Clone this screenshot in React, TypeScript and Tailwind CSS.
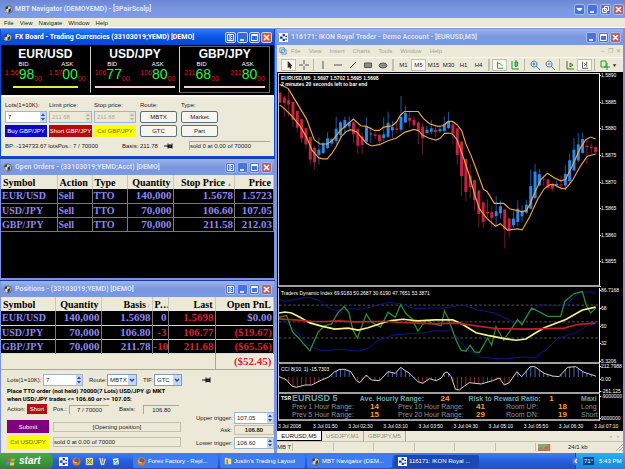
import type { ReactNode } from "react"
import clsx from "clsx"

const pairs = [
  { name: "EUR/USD", bid: ["1.56", "98"], ask: ["1.57", "00"], bar: "bg-[#e8e83c]" },
  { name: "USD/JPY", bid: ["106", "77"], ask: ["106", "80"], bar: "bg-[#f6d0cc]" },
  { name: "GBP/JPY", bid: ["211", "68"], ask: ["211", "80"], bar: "bg-[#f6d0cc]" },
]

const orders = [
  ["EUR/USD", "Sell", "TTO", "140,000", "1.5678", "1.5723"],
  ["USD/JPY", "Sell", "TTO", "70,000", "106.60", "107.05"],
  ["GBP/JPY", "Sell", "TTO", "70,000", "211.58", "212.03"],
]

const positions = [
  ["EUR/USD", "140,000", "1.5698", "0", "1.5698", "$0.00"],
  ["USD/JPY", "70,000", "106.80", "-3", "106.77", "($19.67)"],
  ["GBP/JPY", "70,000", "211.78", "-10", "211.68", "($65.56)"],
]

// high, body top, body bottom, low, 1 = up
const candles = [
  [80, 80, 110, 110, 0], [88, 95, 111, 153, 0], [68, 103, 116, 152, 0], [108, 108, 162, 185, 0],
  [135, 135, 186, 200, 0], [160, 160, 218, 232, 0], [187, 187, 236, 250, 0], [212, 214, 282, 297, 0],
  [240, 246, 290, 312, 0], [216, 252, 268, 297, 1], [228, 233, 262, 265, 1], [200, 218, 247, 250, 1],
  [218, 220, 234, 240, 1], [153, 189, 226, 236, 1], [165, 170, 208, 214, 1], [152, 163, 186, 206, 1],
  [152, 170, 182, 190, 1], [168, 170, 206, 232, 0], [186, 190, 240, 265, 0], [200, 212, 238, 265, 0],
  [153, 184, 228, 232, 1], [183, 203, 206, 232, 1], [196, 206, 211, 220, 0], [206, 207, 227, 236, 0],
  [155, 206, 217, 226, 1], [138, 171, 213, 217, 1], [165, 184, 194, 216, 1], [170, 188, 192, 203, 0],
  [90, 153, 192, 200, 1], [120, 142, 170, 172, 1], [134, 156, 165, 186, 0], [150, 162, 178, 184, 0],
  [165, 170, 196, 235, 0], [172, 183, 218, 265, 0], [182, 192, 202, 206, 1], [162, 188, 198, 204, 1],
  [182, 192, 199, 215, 0], [182, 190, 196, 203, 1], [152, 175, 196, 200, 1], [138, 167, 187, 190, 1],
  [168, 176, 202, 237, 0], [185, 188, 268, 297, 0], [226, 228, 332, 392, 0], [278, 280, 380, 407, 0],
  [295, 330, 365, 398, 0], [342, 344, 404, 435, 0], [372, 375, 446, 487, 0], [408, 411, 470, 487, 0],
  [402, 440, 443, 455, 0], [422, 440, 458, 487, 0], [391, 438, 452, 480, 1], [405, 423, 444, 460, 1],
  [430, 432, 492, 550, 0], [458, 460, 496, 518, 0], [436, 460, 480, 487, 1], [405, 430, 470, 482, 1],
  [420, 437, 453, 470, 1], [403, 418, 442, 446, 1], [312, 362, 430, 432, 1], [295, 318, 398, 402, 1],
  [310, 326, 360, 362, 1], [330, 342, 344, 362, 0], [340, 342, 367, 374, 0], [350, 355, 370, 377, 0],
  [346, 355, 360, 366, 1], [330, 357, 360, 373, 0], [298, 325, 360, 374, 1], [264, 284, 347, 352, 1],
  [217, 252, 315, 318, 1], [202, 236, 285, 290, 1], [200, 220, 262, 264, 1], [222, 240, 245, 296, 0],
  [234, 243, 248, 264, 0], [243, 244, 259, 265, 0],
]

const bandUpper =
  "2,55 28,68 41,90 83,160 106,222 123,235 145,235 163,222 184,195 203,178 224,160 246,180 263,182 288,194 302,194 315,184 341,180 354,168 367,146 378,137 419,137 434,158 453,174 478,182 493,180 510,167 522,167 536,177 550,195 562,234 578,270 596,318 615,371 626,378 648,414 676,414 694,430 730,439 744,436 756,415 768,385 788,342 808,323 828,337 848,346 862,342 883,300 908,245 923,222 938,214 953,220"
const bandLower =
  "2,117 18,130 38,150 63,180 83,215 100,255 120,277 132,280 145,280 158,265 171,245 188,212 203,197 216,192 233,198 250,217 263,233 278,241 302,237 328,225 354,217 378,200 406,191 420,195 432,208 450,217 472,223 485,218 498,203 510,202 522,205 536,222 553,270 573,330 588,385 603,430 626,460 652,483 666,475 688,495 718,491 732,494 754,455 778,402 798,370 816,357 828,358 848,368 862,370 883,345 908,300 928,272 953,265"

const tdiLines = [
  { color: "#14148c", width: 3, points: "0,55 18,62 48,56 88,48 118,58 148,80 168,90 218,84 248,86 288,76 328,65 363,68 408,84 448,82 498,82 553,72 598,88 648,97 708,125 733,122 758,90 788,72 828,75 863,72 898,40 913,33 953,34" },
  { color: "#14148c", width: 3, points: "0,110 38,140 88,195 128,211 188,208 238,213 268,205 298,180 348,163 398,160 438,158 468,150 498,152 518,148 538,175 568,210 608,232 678,237 738,230 768,235 808,205 838,175 898,155 928,135 953,130" },
  { color: "#2c8a34", width: 4, points: "0,110 23,105 41,155 58,172 78,195 93,212 118,155 138,135 158,130 176,98 196,78 210,95 223,150 236,173 263,100 278,125 306,140 328,95 350,110 366,72 383,100 398,112 418,152 443,118 463,130 488,136 498,90 510,115 533,180 548,210 563,213 575,195 588,215 603,217 628,173 640,195 653,138 676,180 718,117 731,132 760,82 783,93 808,107 848,107 860,62 888,38 913,32 925,75 938,97 953,83" },
  { color: "#f4f08c", width: 5, points: "0,97 18,94 38,97 63,110 93,127 128,137 168,146 208,143 238,149 268,142 308,128 338,120 373,116 418,121 468,118 523,118 553,132 593,157 628,165 678,175 713,180 743,176 768,160 798,142 863,117 913,88 953,79" },
  { color: "#c42026", width: 5, points: "0,115 48,118 98,122 138,123 178,121 228,124 328,122 358,126 418,128 468,130 538,128 598,137 658,145 748,146 858,143 898,132 953,128" },
]

const cci = [
  [0, 290], [23, 300], [38, 318], [53, 322], [78, 315], [98, 315], [128, 300], [148, 292], [168, 275], [183, 268],
  [198, 268], [216, 275], [233, 302], [243, 308], [263, 285], [278, 300], [303, 302], [328, 275], [350, 280],
  [366, 262], [380, 272], [393, 280], [418, 305], [433, 310], [453, 296], [473, 302], [488, 295], [498, 279],
  [506, 276], [518, 290], [531, 328], [543, 330], [558, 318], [573, 308], [608, 312], [643, 302], [663, 294],
  [678, 315], [693, 308], [716, 275], [730, 290], [756, 260], [770, 260], [798, 280], [823, 288], [843, 290],
  [868, 262], [893, 260], [918, 277], [953, 288],
]

function cciAt(x: number) {
  const i = Math.max(1, cci.findIndex(([px]) => px >= x))
  const [x0, y0] = cci[i - 1]
  const [x1, y1] = cci[i]
  return y0 + ((x - x0) / (x1 - x0)) * (y1 - y0)
}

const candleX = (i: number) => 3 + i * 13.01

/* ---------- small controls ---------- */

function Spin({ id, value, disabled, className }: { id: string; value: string; disabled?: boolean; className?: string }) {
  return (
    <span className={clsx("flex h-3 border border-[#9db5cf]", disabled ? "bg-[#ece9d8]" : "bg-white", className)}>
      <input
        id={id}
        defaultValue={value}
        disabled={disabled}
        className={clsx("w-full min-w-0 bg-transparent pl-[2px] leading-none", disabled && "text-[#aca899]")}
      />
      <svg viewBox="0 0 6 10" className={clsx("h-full w-[6px] shrink-0", disabled ? "bg-[#e6e3d2] text-[#b8b4a2]" : "bg-[#c6d6f8] text-[#2b4a8c]")}>
        <path d="M1 4 3 1.5 5 4zM1 6 3 8.5 5 6z" fill="currentColor" />
      </svg>
    </span>
  )
}

function Drop({ id, value, className }: { id: string; value: string; className?: string }) {
  return (
    <span className={clsx("flex h-3 border border-[#7f9db9] bg-white", className)}>
      <select id={id} className="w-full min-w-0 appearance-none bg-transparent pl-[2px] leading-none">
        <option>{value}</option>
      </select>
      <svg viewBox="0 0 8 10" className="h-full w-2 shrink-0 bg-[#c6d6f8]">
        <path d="M2 4l2 2 2-2" fill="none" stroke="#2b4a8c" strokeWidth="1.5" />
      </svg>
    </span>
  )
}

function Pin() {
  return (
    <svg viewBox="0 0 9 6" className="h-[6px] w-[9px] shrink-0">
      <path d="M0 3h4M4 .5v5M4.5 2h3v2.5h-3zM8 .5v5" stroke="#111" fill="#444" />
    </svg>
  )
}

const XP_GLYPHS: Record<string, { label: string; d: string }> = {
  layout: { label: "Layout", d: "M2.5 2.5h6v6h-6zM5 2.5v6M6 4.5h1M6 6.5h1" },
  menu: { label: "Options", d: "M3 4.5h5L5.5 7z" },
  min: { label: "Minimize", d: "M3 8h4" },
  max: { label: "Maximize", d: "M2.5 2.5h6v6h-6zM2.5 3.5h6" },
  restore: { label: "Restore", d: "M4.5 2.5h4v4h-4zM2.5 4.5h4v4h-4z" },
  close: { label: "Close", d: "M3 3l5 5M8 3L3 8" },
}

function XpButton({ kind, active }: { kind: string; active?: boolean }) {
  const glyph = XP_GLYPHS[kind]
  const color =
    kind === "close" ? (active ? "bg-[#e0562f]" : "bg-[#b8606c]") : active ? "bg-[#3468dc]" : "bg-[#4a72dc]"
  return (
    <button
      type="button"
      aria-label={glyph.label}
      className={clsx("h-[11px] w-[11px] shrink-0 rounded-xs border", active ? "border-[#c8d8fa]" : "border-[#a4baf0]", color)}
    >
      <svg viewBox="1 1 9 9" className="h-full w-full">
        <path d={glyph.d} fill={kind === "menu" ? "#fff" : "none"} stroke="#fff" strokeWidth={kind === "min" || kind === "close" ? 1.6 : 1} />
      </svg>
    </button>
  )
}

function GlobeIcon() {
  return (
    <svg viewBox="0 0 10 10" className="h-[9px] w-[9px] shrink-0">
      <circle cx="5.5" cy="5" r="4" fill="#d8dccc" stroke="#333" strokeWidth=".7" />
      <path d="M2 2.5 4.5 1v3L2 5zM5 5l3-2v4L5 9z" fill="#333a44" />
      <path d="M1 6.5l3 2M6 2.5l2 .5" stroke="#c8b870" strokeWidth="1.2" />
    </svg>
  )
}

function CrossIcon() {
  return (
    <svg viewBox="0 0 10 10" className="h-[9px] w-[9px] shrink-0">
      <path d="M0 0h10v10H0z" fill="#fff" />
      <path d="M4 1h2.500v2.500H4zM1 4h3v2.500H1zM4 6.500h2.500V9H4zM7 3h2v1.500H7zM7 6h2v1.500H7z" fill="#1c3f94" />
    </svg>
  )
}

function TitleBar({ title, icon, kinds, active }: { title: string; icon: ReactNode; kinds: string[]; active?: boolean }) {
  return (
    <div
      className={clsx(
        "flex h-4 items-center gap-[1px] pr-[2px] pl-[2px]",
        active ? "bg-linear-to-b from-[#2e7af6] via-[#0a55e4] to-[#0549cc]" : "bg-linear-to-b from-[#9bb4ee] via-[#7a96df] to-[#7a98e4]"
      )}
    >
      {icon}
      <h2 className={clsx("min-w-0 flex-1 truncate pl-[2px] font-[Roboto] text-[7px] font-bold", active ? "text-white" : "text-[#dbe5fa]")}>
        {title}
      </h2>
      {kinds.map((kind) => (
        <XpButton key={kind} kind={kind} active={active} />
      ))}
    </div>
  )
}

/* ---------- left column ---------- */

function Quote({ label, parts }: { label: string; parts: string[] }) {
  return (
    <div className="flex flex-col items-center">
      <span className="text-[6px] leading-[6px] text-white">{label}</span>
      <span className="flex text-[7px] leading-none text-[#d42424]">
        <span className="pt-[2px]">{parts[0]}</span>
        <span className="text-[14px] leading-[15px] text-[#2cf04c]">{parts[1]}</span>
        <span className="self-end">00</span>
      </span>
    </div>
  )
}

function FxBoard() {
  return (
    <section className="border-x border-b-2 border-[#0a48cc] bg-[#ece9d8]">
      <TitleBar active title="FX Board - Trading Currencies (33103019;YEMD) [DEMO]" icon={<GlobeIcon />} kinds={["layout", "min", "max", "close"]} />
      <div className="flex bg-black pt-[1px] pr-1 pb-[2px]">
        {pairs.map((pair, i) => (
          <div
            key={pair.name}
            className={clsx("h-[47px] flex-1 border-y px-1 pt-[1px]", i < 2 ? "border-r border-y-transparent border-r-[#d0d0d0]" : "border-r border-[#666]")}
          >
            <h3 className="text-center text-[12px] leading-[13px] font-bold text-white">{pair.name}</h3>
            <div className="flex justify-between">
              <Quote label="BID" parts={pair.bid} />
              <Quote label="ASK" parts={pair.ask} />
            </div>
            <div className={clsx("mt-1 h-[2px]", i === 0 ? "mx-2" : "mx-0", pair.bar)} />
          </div>
        ))}
      </div>
      <form className="border-t-2 border-[#faf8f0] px-1 pt-1 pb-[6px]">
        <div className="grid grid-cols-[42px_43px_42px_39px_39px] gap-x-[2px] gap-y-[2px]">
          <label htmlFor="fx-lots">Lots(1=10K):</label>
          <label htmlFor="fx-limit">Limit price:</label>
          <label htmlFor="fx-stop">Stop price:</label>
          <span className="pl-[2px]">Route:</span>
          <span className="pl-[2px]">Type:</span>
          <Spin id="fx-lots" value="7" />
          <Spin id="fx-limit" value="211.68" disabled />
          <Spin id="fx-stop" value="211.68" disabled />
          <button type="button" className="ml-[2px] rounded-xs border border-[#5a7080] bg-[#f6f5ee]">MBTX</button>
          <button type="button" className="ml-[2px] rounded-xs border border-[#5a7080] bg-[#f6f5ee]">Market</button>
          <button type="button" className="h-3 bg-[#0808cc] text-white">Buy GBP/JPY</button>
          <button type="button" className="h-3 bg-[#b80808] text-white">Short GBP/JPY</button>
          <button type="button" className="h-3 bg-[#fcfc08] text-[#6c6c10]">Cxl GBP/JPY</button>
          <button type="button" className="ml-[2px] rounded-xs border border-[#5a7080] bg-[#f6f5ee]">GTC</button>
          <button type="button" className="ml-[2px] rounded-xs border border-[#5a7080] bg-[#f6f5ee]">Part</button>
        </div>
        <div className="mt-1 flex items-center">
          <span className="w-[117px]">BP: -134733.67 lotsPos.: 7 / 70000</span>
          <span className="mr-[6px]">Basis: 211.78</span>
          <Pin />
          <span className="ml-4 flex-1 border-t border-l border-[#aca899]">sold 0 at 0.00 of 70000</span>
        </div>
      </form>
    </section>
  )
}

const thClass = "truncate border-r border-[#cbc7b8] px-[2px] py-0 font-bold"

function OpenOrders() {
  return (
    <section className="flex flex-1 flex-col border-x border-b-2 border-[#7a94e0] bg-black">
      <TitleBar title="Open Orders - (33103019;YEMD;Acct) [DEMO]" icon={<GlobeIcon />} kinds={["layout", "min", "max", "close"]} />
      <table className="w-full table-fixed border-collapse font-['Liberation_Serif',serif] text-[10px] leading-[13px] font-bold">
        <thead className="bg-[#ece9d8] text-black">
          <tr className="h-[14px]">
            <th className={clsx(thClass, "w-[56px] text-left")}>Symbol</th>
            <th className={clsx(thClass, "w-[35px] text-left")}>Action</th>
            <th className={clsx(thClass, "w-[35px] text-left")}>Type</th>
            <th className={clsx(thClass, "w-[46px] text-right")}>Quantity</th>
            <th className={clsx(thClass, "text-right")}>
              Stop Price<span className="pl-[2px] text-[5px] leading-none text-[#999]">▲</span>
            </th>
            <th className={clsx(thClass, "w-[39px] text-right")}>Price</th>
          </tr>
        </thead>
        <tbody className="text-[#8c88f0]">
          {orders.map((row) => (
            <tr key={row[0]} className="h-[14px] border-b border-[#77777c]">
              {row.map((cell, i) => (
                <td key={i} className={clsx("border-r border-[#77777c] px-[1px] py-0", i > 2 && "text-right text-[11px]")}>
                  {cell}
                </td>
              ))}
            </tr>
          ))}
        </tbody>
      </table>
    </section>
  )
}

function Positions() {
  return (
    <section className="border-x border-[#7a94e0] bg-[#ece9d8]">
      <TitleBar title="Positions - (33103019;YEMD) [DEMO]" icon={<GlobeIcon />} kinds={["layout", "min", "max", "close"]} />
      <table className="w-full table-fixed border-collapse font-['Liberation_Serif',serif] text-[10px] leading-[13px] font-bold">
        <thead className="text-black">
          <tr className="h-[14px]">
            <th className={clsx(thClass, "w-[54px] text-left")}>Symbol</th>
            <th className={clsx(thClass, "w-[46px] text-right")}>Quantity</th>
            <th className={clsx(thClass, "w-[51px] text-right")}>
              Basis<span className="pl-[2px] text-[6px] leading-none text-[#999]">/</span>
            </th>
            <th className={clsx(thClass, "w-4 px-0 text-center")}>P...</th>
            <th className={clsx(thClass, "w-[47px] text-right")}>Last</th>
            <th className={clsx(thClass, "text-right")}>Open PnL</th>
          </tr>
        </thead>
        <tbody className="bg-black text-[#8c88f0]">
          {positions.map((row, r) => (
            <tr key={row[0]} className="h-[14px] border-b border-[#d8d8d8]">
              {row.map((cell, i) => (
                <td
                  key={i}
                  className={clsx("border-r border-[#77777c] px-[1px] py-0", i > 0 && "text-right text-[11px]", (i === 4 || (r > 0 && i > 2)) && "text-[#d42430]")}
                >
                  {cell}
                </td>
              ))}
            </tr>
          ))}
        </tbody>
        <tfoot>
          <tr className="h-4">
            <td colSpan={5} />
            <td className="border-l border-[#aca899] px-[2px] text-right text-[11px] text-[#d42430]">($52.45)</td>
          </tr>
        </tfoot>
      </table>
      <form className="border-t border-[#aca899] pt-1 pb-1 pl-[6px]">
        <div className="flex items-center">
          <label htmlFor="pos-lots" className="w-9">Lots(1=10K):</label>
          <Spin id="pos-lots" value="7" className="w-10" />
          <label htmlFor="pos-route" className="ml-[6px] w-[18px]">Route:</label>
          <Drop id="pos-route" value="MBTX" className="w-[30px]" />
          <label htmlFor="pos-tif" className="ml-[6px] w-[11px]">TIF:</label>
          <Drop id="pos-tif" value="GTC" className="mr-5 w-7" />
          <Pin />
        </div>
        <p className="mt-[1px] font-[Roboto] text-[6px] leading-[8px] font-bold text-black">
          Place TTO order (not held) 70000(7 Lots) USD/JPY @ MKT
          <br />
          when USD/JPY trades &lt;= 106.60 or &gt;= 107.05:
        </p>
        <div className="mt-[1px] flex justify-between">
          <div className="grid w-[174px] grid-cols-[42px_1fr] gap-x-1 gap-y-[2px]">
            <div className="col-span-2 flex items-center">
              <span className="w-5">Action:</span>
              <button type="button" className="h-[10px] w-5 bg-[#b40c14] text-white">Short</button>
              <span className="ml-[6px] w-4">Pos.:</span>
              <output className="w-10 border-t border-l border-[#aca899] text-center">7 / 70000</output>
              <span className="ml-[10px] w-6">Basis:</span>
              <output className="w-9 border-t border-l border-[#aca899] text-center">106.80</output>
            </div>
            <button type="button" className="mt-1 h-[13px] bg-[#800080] text-white">Submit</button>
            <output className="mt-1 self-center border border-[#c4c0b0] text-center">[Opening position]</output>
            <button type="button" className="h-[14px] bg-[#fcfc08] text-[#6c6c10]">Cxl USD/JPY</button>
            <output className="self-center border border-[#c4c0b0]">sold 0 at 0.00 of 70000</output>
          </div>
          <div className="grid grid-cols-[36px_40px] items-center gap-x-[2px] gap-y-[1px] pt-2 text-right">
            <label htmlFor="upper" className="whitespace-nowrap">Upper trigger:</label>
            <Spin id="upper" value="107.05" />
            <span>Ask:</span>
            <output className="border border-[#c4c0b0] text-center font-bold">106.80</output>
            <label htmlFor="lower" className="whitespace-nowrap">Lower trigger:</label>
            <Spin id="lower" value="106.60" />
          </div>
        </div>
      </form>
    </section>
  )
}

/* ---------- chart window ---------- */

const tools = [
  { label: "Cursor", d: "M5 2v7l1.500-1.500 1 2.500 1-.5-1-2.500h2z", fill: "#222", color: "#222", on: true },
  { label: "Crosshair", d: "M6 1v4M6 7v4M1 6h4M7 6h4" },
  { label: "Vertical line", d: "M6 2v8" },
  { label: "Horizontal line", d: "M2 6h8" },
  { label: "Trendline", d: "M3 9l6-6" },
  { label: "Rectangle", d: "M2.500 4h7v4.500h-7z", fill: "#8c8c8c" },
  { label: "Ellipse", d: "M2 6.500a4 2.500 0 1 0 8 0a4 2.500 0 1 0-8 0", fill: "#8c8c8c" },
]

const chartTools = [
  { label: "Chart shift", d: "M3 2v8h7M3 5c2-2 4 0 6 2", color: "#2c7a34", on: true },
  { label: "Candlesticks", d: "M3 2v8h7M7 1v7M6 3h2.500v4H6z", color: "#1f9a30" },
  { label: "Zoom in", d: "M5 2a3 3 0 1 0 .1 0M3.500 5h3M5 3.500v3M7 7l4 4", color: "#3a78b8" },
  { label: "Zoom out", d: "M5 2a3 3 0 1 0 .1 0M3.500 5h3M7 7l4 4", color: "#3a78b8" },
  { label: "Auto scroll", d: "M3 2v8h7M6 4l3 2-3 2z", color: "#2c7a34" },
  { label: "Shift end", d: "M3 2v8h7M8 2v6M5 4l2 1.500-2 1.500", color: "#444", on: true },
  { label: "Indicators", d: "M2 2h5v6H2zM8 4v7M5 8h6", color: "#1f9a30" },
]

function AxisLabel({ children }: { children: ReactNode }) {
  return (
    <span className="flex items-center whitespace-nowrap">
      <span className="h-px w-[1px] bg-white" />
      {children}
    </span>
  )
}

function Pane({ children, labels, className }: { children: ReactNode; labels: string[]; className: string }) {
  return (
    <div className={clsx("flex", className)}>
      <div className="relative min-w-0 flex-1 border-r border-b-2 border-l border-b-[#a0a0a0] border-l-[#c8c8c8] border-r-white">{children}</div>
      <div className="flex w-[23px] flex-col justify-between text-[5px] leading-[5px]">
        {labels.map((label) => (
          <AxisLabel key={label}>{label}</AxisLabel>
        ))}
      </div>
    </div>
  )
}

function PriceChart() {
  return (
    <Pane className="h-[214px]" labels={["1.5890", "1.5885", "1.5880", "1.5875", "1.5870", "1.5865", "1.5860", "1.5855", ""]}>
      <svg viewBox="0 24 963 636" preserveAspectRatio="none" className="absolute inset-0 h-full w-full border-t border-[#d0d0d0]">
        {candles.map(([hi, top, bottom, lo, up], i) => (
          <g key={i} fill={up ? "#2e86e4" : "#c42440"} stroke={up ? "#2e68b4" : "#8c2434"}>
            <path d={`M${candleX(i)} ${hi}V${lo}`} strokeWidth="2.500" />
            <rect x={candleX(i) - 4.5} y={top} width="9" height={bottom - top} stroke="none" />
          </g>
        ))}
        <polyline points={bandUpper} fill="none" stroke="#eca64c" strokeWidth="3.500" />
        <polyline points={bandLower} fill="none" stroke="#eca64c" strokeWidth="3.500" />
      </svg>
      <p className="relative pt-[2px] pl-[2px] text-[5px] leading-[6px] font-bold">
        EURUSD,M5&nbsp; 1.5697 1.5702 1.5695 1.5698
        <br />2 minutes 20 seconds left to bar end
      </p>
    </Pane>
  )
}

function TdiChart() {
  return (
    <Pane className="h-[77px] pt-[1px]" labels={["86.7168", "68", "50", "32", "5.3206"]}>
      <svg viewBox="0 21 963 225" preserveAspectRatio="none" className="absolute inset-0 h-full w-full">
        {[73, 124, 173].map((y) => (
          <path key={y} d={`M0 ${y}H963`} stroke="#808080" strokeWidth="2" strokeDasharray="8 6" />
        ))}
        {tdiLines.map((line, i) => (
          <polyline key={i} points={line.points} fill="none" stroke={line.color} strokeWidth={line.width} />
        ))}
      </svg>
      <p className="relative pt-[2px] pl-[2px] text-[5px] leading-[6px]">Traders Dynamic Index 69.9183 50.2687 30.6190 47.7651 53.3871</p>
    </Pane>
  )
}

function CciChart() {
  return (
    <Pane className="h-[30px]" labels={["212.7988", "0.00", "-261.125"]}>
      <svg viewBox="0 252 963 84" preserveAspectRatio="none" className="absolute inset-0 h-full w-full">
        {candles.map((_, i) => {
          const y = cciAt(candleX(i))
          return <path key={i} d={`M${candleX(i)} 291V${y}`} stroke={y < 291 ? "#4468b8" : "#8c2c38"} strokeWidth="3" />
        })}
        <polyline points={cci.map((p) => p.join(",")).join(" ")} fill="none" stroke="#d4d4d4" strokeWidth="3" />
      </svg>
      <p className="relative pt-[2px] pl-[2px] text-[5px] leading-[6px]">CCI 8(10, 1) -15.7303</p>
    </Pane>
  )
}

function RangePane() {
  const row = "grid grid-cols-[11px_78fr_28fr_78fr_30fr_38fr_37fr_18fr] text-[7px] leading-[8px] whitespace-nowrap text-[#8a949c]"
  const num = "text-[8px] font-bold text-[#f0a030]"
  return (
    <Pane className="h-[27px]" labels={["-9000000", "9000000"]}>
      <div className="pl-[2px]">
        <div className="grid grid-cols-[11px_68fr_81fr_28fr_81fr_32fr_18fr] text-[7px] leading-[9px] font-bold whitespace-nowrap text-[#6aa4a8]">
          <span className="text-[5px] text-white">TSR</span>
          <span className="text-[9px]">EURUSD 5</span>
          <span>Ave. Hourly Range:</span>
          <span className={num}>24</span>
          <span>Risk to Reward Ratio:</span>
          <span className={num}>1</span>
          <span>Maxi</span>
        </div>
        <div className={row}>
          <span />
          <span>Prev 1 Hour Range:</span>
          <span className={num}>14</span>
          <span>Prev 10 Hour Range:</span>
          <span className={num}>41</span>
          <span>Room UP:</span>
          <span className={clsx(num, "text-center")}>18</span>
          <span>Long</span>
        </div>
        <div className={row}>
          <span />
          <span>Prev 5 Hour Range:</span>
          <span className={num}>15</span>
          <span>Prev 20 Hour Range:</span>
          <span className={num}>29</span>
          <span>Room DN:</span>
          <span className={clsx(num, "text-center")}>19</span>
          <span>Short</span>
        </div>
      </div>
    </Pane>
  )
}

const times = ["3 Jul 2008", "3 Jul 01:50", "3 Jul 02:30", "3 Jul 03:10", "3 Jul 03:50", "3 Jul 04:30", "3 Jul 05:10", "3 Jul 05:50", "3 Jul 06:30", "3 Jul 07:10"]

function ToolButton({ tool }: { tool: { label: string; d: string; fill?: string; color?: string; on?: boolean } }) {
  return (
    <button type="button" aria-label={tool.label} className={clsx("h-3 w-[15px] shrink-0", tool.on && "border border-[#c4c0b0] bg-[#f8f7f0]")}>
      <svg viewBox="0 0 12 12" className="mx-auto h-full">
        <path d={tool.d} fill={tool.fill ?? "none"} stroke={tool.color ?? "#555"} />
      </svg>
    </button>
  )
}

function ChartWindow() {
  return (
    <section className="flex min-w-0 flex-1 flex-col border-r-2 border-l-2 border-[#7a94e0] bg-[#ece9d8]">
      <TitleBar title="116171: IKON Royal Trader - Demo Account - [EURUSD,M5]" icon={<CrossIcon />} kinds={["min", "max", "close"]} />
      <nav className="flex h-3 items-center gap-2 px-[2px] text-[#a8a498]">
        <svg viewBox="0 0 9 9" className="-mr-1 h-2 w-2">
          <path d="M1 1h5v5H1zM3 3h5v5H3z" fill="#e8f0fa" stroke="#5a8ab8" />
        </svg>
        {["File", "View", "Insert", "Charts", "Tools", "Window", "Help"].map((item) => (
          <a key={item} href="#">{item}</a>
        ))}
        <span className="ml-auto">–&nbsp; ❐&nbsp; ✕</span>
      </nav>
      <div className="flex h-[15px] items-center border-t border-[#faf9f2] pl-1">
        {tools.map((tool, i) => (
          <span key={tool.label} className={clsx("flex", i === 2 && "ml-[2px] border-l border-[#bbb7a6] pl-[1px]")}>
            <ToolButton tool={tool} />
          </span>
        ))}
        <span className="mx-[2px] h-3 border-l-2 border-[#c4c0b0]" />
        {["M1", "M5", "M15", "M30", "H1", "H4"].map((period) => (
          <button key={period} type="button" className={clsx("h-3 w-[15px] shrink-0", period === "M5" && "border border-[#c4c0b0] bg-[#f8f7f0]")}>
            {period}
          </button>
        ))}
        <span className="mx-[2px] h-3 border-l-2 border-[#c4c0b0]" />
        {chartTools.map((tool, i) => (
          <span key={tool.label} className={clsx("flex", (i === 2 || i === 4 || i === 6) && "ml-[2px] border-l border-[#bbb7a6] pl-[2px]")}>
            <ToolButton tool={tool} />
          </span>
        ))}
        <span className="text-[5px]">▼</span>
      </div>
      <div className="bg-black pt-[1px] pl-[1px] text-white">
        <PriceChart />
        <TdiChart />
        <CciChart />
        <RangePane />
        <div className="grid h-[10px] grid-cols-[repeat(9,35fr)_29fr] items-center text-[5px] whitespace-nowrap">
          {times.map((time) => (
            <span key={time}>{time}</span>
          ))}
        </div>
      </div>
      <div className="flex h-[11px] items-stretch border-b border-[#c4c0b0] text-[#8c887a]">
        <button type="button" className="w-[45px] border-r border-b border-black bg-white text-black">EURUSD,M5</button>
        <button type="button" className="w-[42px] border-r border-[#aca899]">USDJPY,M1</button>
        <button type="button" className="w-[42px] border-r border-[#aca899]">GBPJPY,M5</button>
        <span className="ml-auto pr-1 leading-[10px]">‹&nbsp;&nbsp;&nbsp;›</span>
      </div>
      <footer className="flex h-[10px] items-center">
        <span className="w-4 shrink-0 border-r border-[#c4c0b0] whitespace-nowrap">MB T</span>
        {["a", "b", "c", "d", "e", "f"].map((cell) => (
          <span key={cell} className="h-2 flex-1 border-r border-[#c4c0b0]" />
        ))}
        <svg viewBox="0 0 13 7" className="ml-[2px] h-[7px] w-[13px]">
          <path d="M0 0h13v7H0z" fill="#d8cca0" />
          <path d="M1 0v4M3 0v3M5 0v5M7 0v3M9 0v2" stroke="#2c8a34" />
          <path d="M1 4v3M3 3v4M5 5v2M7 3v4M9 2v5M11 0v7" stroke="#8c2424" />
        </svg>
        <span className="w-[64px] pl-[17px]">24/1 kb</span>
        <svg viewBox="0 0 8 8" className="h-2 w-2">
          <path d="M1 8l7-7M4 8l4-4M7 8l1-1" stroke="#a8a498" />
        </svg>
      </footer>
    </section>
  )
}

/* ---------- taskbar ---------- */

function FirefoxIcon() {
  return (
    <svg viewBox="0 0 10 10" className="h-[9px] w-[9px] shrink-0">
      <circle cx="5" cy="5" r="4.500" fill="#e07820" />
      <circle cx="5.500" cy="4" r="2.600" fill="#3c68b8" />
      <path d="M1 3c1 3 4 2 5 3-2 2-4 1-5-1z" fill="#f4b048" />
    </svg>
  )
}

function FolderIcon() {
  return (
    <svg viewBox="0 0 10 10" className="h-2 w-2 shrink-0">
      <path d="M1 1h3l1 1h4v7H1z" fill="#f0e088" />
      <path d="M3 3h2v6H3z" fill="#8c8434" />
    </svg>
  )
}

const tasks = [
  { label: "Forex Factory - Repl...", icon: <FirefoxIcon /> },
  { label: "Justin's Trading Layout", icon: <FolderIcon /> },
  { label: "MBT Navigator (DEM...", icon: <GlobeIcon /> },
  { label: "116171: IKON Royal ...", icon: <CrossIcon />, on: true },
]

function Taskbar() {
  return (
    <footer className="flex h-4 items-center bg-linear-to-b from-[#3f80f0] via-[#245edc] to-[#1f52c8] text-white">
      <button type="button" className="flex h-full w-[53px] items-center gap-[3px] rounded-r-md bg-linear-to-b from-[#4aa84c] to-[#2f8434] pl-[6px] text-[10px] font-bold italic">
        <svg viewBox="0 0 10 10" className="h-[10px] w-[10px]">
          <path d="M1 2q2-1.500 3.500 0L4 5Q2 4 .5 5z" fill="#ea5030" />
          <path d="M5 2.300q2 1 4 0L8.500 5q-2 1-4 0z" fill="#8cc840" />
          <path d="M.4 5.700q2-1 3.500 0L3.300 9q-1.500-1-3.300 0z" fill="#4888ec" />
          <path d="M4.400 6q2 1 4 0L8 9q-2 1-4 0z" fill="#f8cc3c" />
        </svg>
        start
      </button>
      <div className="flex w-20 items-center gap-1 pl-[6px]">
        <CrossIcon />
        <FirefoxIcon />
        <svg viewBox="0 0 10 10" className="h-[9px] w-[9px]">
          <path d="M1 1h8v8H1z" fill="#e8e4a0" />
          <path d="M2 2l6 6M8 2L2 8M5 3a2 2 0 1 0 .1 0" stroke="#7c7420" fill="none" />
        </svg>
        <svg viewBox="0 0 10 10" className="h-[9px] w-[9px]">
          <path d="M2 1l2 8M5 1v8M8 2L6 9" stroke="#d8dce8" strokeWidth="1.500" />
          <path d="M4 5l1 4 2-4" fill="#c87838" />
        </svg>
        <svg viewBox="0 0 10 10" className="h-[9px] w-[9px]">
          <path d="M2 2l6-1 1 7-6 1z" fill="#d4eaf8" />
          <path d="M4 6l3-3M3.500 4h2M5 7h3" stroke="#3c88b8" />
        </svg>
      </div>
      <div className="flex min-w-0 flex-1 gap-[2px]">
        {tasks.map((task) => (
          <button
            key={task.label}
            type="button"
            className={clsx("flex h-[13px] w-[85px] min-w-0 items-center gap-[2px] rounded-xs pl-1 whitespace-nowrap", task.on ? "bg-[#1a48b4]" : "bg-[#3c7cf0]")}
          >
            {task.icon}
            <span className="truncate">{task.label}</span>
          </button>
        ))}
      </div>
      <div className="flex h-full w-[50px] items-center gap-[3px] border-l border-[#0c4cb0] bg-linear-to-b from-[#28b0f0] to-[#1488dc]">
        <button type="button" aria-label="Show hidden icons" className="-ml-1 h-2 w-2 shrink-0 rounded-full bg-[#3c74e4] leading-none">
          <svg viewBox="0 0 8 8">
            <path d="M5 2L3 4l2 2" fill="none" stroke="#fff" strokeWidth="1.300" />
          </svg>
        </button>
        <span className="bg-[#103c94] px-[1px]">71°</span>
        <time className="pl-[2px] whitespace-nowrap">5:43 PM</time>
      </div>
    </footer>
  )
}

export default function App() {
  return (
    <div className="flex min-h-screen flex-col bg-[#7a94e0] font-['Liberation_Sans',sans-serif] text-[6px] leading-[8px] text-[#222]">
      <header>
        <div className="flex h-[18px] items-center gap-[2px] bg-linear-to-b from-[#6c86d4] via-[#7a96e0] to-[#7c9cec] pr-[1px] pl-1">
          <GlobeIcon />
          <h1 className="flex-1 font-[Roboto] text-[7px] font-bold text-[#dbe5fa]">MBT Navigator (DEMOYEMD) - [3PairScalp]</h1>
          {["menu", "min", "restore", "close"].map((kind) => (
            <XpButton key={kind} kind={kind} />
          ))}
        </div>
        <nav className="flex h-[10px] items-center gap-[6px] border-b border-white bg-[#ece9d8] pl-1">
          {["File", "View", "Navigate", "Window", "Help"].map((item) => (
            <a key={item} href="#">{item}</a>
          ))}
        </nav>
      </header>
      <main className="flex flex-1 pt-[1px]">
        <div className="flex w-[44%] min-w-[274px] flex-col gap-[1px] bg-[#1c3c94]">
          <FxBoard />
          <OpenOrders />
          <Positions />
        </div>
        <ChartWindow />
      </main>
      <Taskbar />
    </div>
  )
}
